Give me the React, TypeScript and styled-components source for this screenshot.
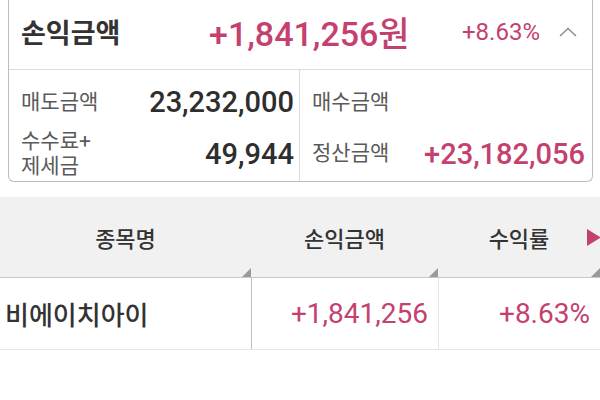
import React from 'react';
import styled, { createGlobalStyle } from 'styled-components';

const GlobalStyle = createGlobalStyle`
  body {
    margin: 0;
    background: #fff;
    font-family: Roboto, "Noto Sans CJK KR", sans-serif;
    color: #333;
  }
`;

const PINK = '#c4416f';

type Row = { name: string; profit: string; rate: string };

const rows: Row[] = [{ name: '비에이치아이', profit: '+1,841,256', rate: '+8.63%' }];

function ChevronUp() {
  return (
    <svg width="18" height="10" viewBox="0 0 18 10">
      <polyline points="1,9 9,1.5 17,9" fill="none" stroke="#888" strokeWidth="1.3" />
    </svg>
  );
}

export default function App() {
  return (
    <Page>
      <GlobalStyle />
      <SummaryCard>
        <SummaryHead>
          <HeadTitle>손익금액</HeadTitle>
          <HeadAmount>+1,841,256원</HeadAmount>
          <HeadRate>+8.63%</HeadRate>
          <Toggle>
            <ChevronUp />
          </Toggle>
        </SummaryHead>
        <SummaryGrid>
          <Cell $left $first>
            <Label>매도금액</Label>
            <Value>23,232,000</Value>
          </Cell>
          <Cell $first>
            <Label>매수금액</Label>
            <Value />
          </Cell>
          <Cell $left>
            <Label>
              수수료+
              <br />
              제세금
            </Label>
            <Value>49,944</Value>
          </Cell>
          <Cell>
            <Label>정산금액</Label>
            <Value $pink>+23,182,056</Value>
          </Cell>
        </SummaryGrid>
      </SummaryCard>

      <Table>
        <HeaderRow>
          <HeadCell>종목명</HeadCell>
          <HeadCell>손익금액</HeadCell>
          <HeadCell>
            수익률
            <MoreArrow width="14" height="17" viewBox="0 0 14 17">
              <polygon points="0,0 14,8.5 0,17" fill={PINK} />
            </MoreArrow>
          </HeadCell>
        </HeaderRow>
        {rows.map((r) => (
          <BodyRow key={r.name}>
            <NameCell>{r.name}</NameCell>
            <NumCell $divider="#bdbdbd">{r.profit}</NumCell>
            <NumCell $divider="#e6e6e6">{r.rate}</NumCell>
          </BodyRow>
        ))}
      </Table>
    </Page>
  );
}

const Page = styled.div`
  width: 600px;
  height: 400px;
  overflow: hidden;
`;

const SummaryCard = styled.div`
  margin: 0 7px 0 8px;
  border: 1px solid #bcbcbc;
  border-top: none;
  border-radius: 0 0 6px 6px;
`;

const SummaryHead = styled.div`
  height: 70px;
  display: flex;
  align-items: center;
  padding: 0 15px 0 12px;
  border-bottom: 1px solid #dcdcdc;
  box-sizing: border-box;
`;

const HeadTitle = styled.div`
  width: 188px;
  font-size: 27px;
  font-weight: 700;
  color: #333;
  margin-top: -6px;
`;

const HeadAmount = styled.div`
  font-size: 34px;
  font-weight: 500;
  color: ${PINK};
  margin-top: -6px;
`;

const HeadRate = styled.div`
  margin-left: auto;
  font-size: 24px;
  color: ${PINK};
  margin-top: -6px;
`;

const Toggle = styled.div`
  display: flex;
  margin-left: 19px;
  margin-top: -6px;
`;

const SummaryGrid = styled.div`
  display: grid;
  grid-template-columns: 291px 1fr;
  grid-template-rows: 56px 55px;
`;

const Cell = styled.div<{ $left?: boolean; $first?: boolean }>`
  display: flex;
  align-items: center;
  justify-content: space-between;
  padding: ${(p) => (p.$first ? '8px' : '0')} ${(p) => (p.$left ? '5px' : '7px')} 0 12px;
  border-right: ${(p) => (p.$left ? '1px solid #dcdcdc' : 'none')};
`;

const Label = styled.div`
  font-size: 21px;
  line-height: 25px;
  color: #5a5a5a;
`;

const Value = styled.div<{ $pink?: boolean }>`
  font-size: 29px;
  font-weight: 500;
  color: ${(p) => (p.$pink ? PINK : '#2e2e2e')};
`;

const Table = styled.div`
  margin-top: 15px;
`;

const HeaderRow = styled.div`
  display: grid;
  grid-template-columns: 251px 187px 1fr;
  height: 81px;
  background: #f1f1f1;
  border-bottom: 1px solid #c8c8c8;
  box-sizing: border-box;
`;

const HeadCell = styled.div`
  position: relative;
  display: flex;
  align-items: center;
  justify-content: center;
  font-size: 22px;
  font-weight: 500;
  color: #333;

  &::after {
    content: '';
    position: absolute;
    right: 0;
    bottom: 0;
    border-style: solid;
    border-width: 0 0 9px 9px;
    border-color: transparent transparent #9a9a9a transparent;
  }
`;

const MoreArrow = styled.svg`
  position: absolute;
  right: -1px;
  top: 32px;
`;

const BodyRow = styled.div`
  display: grid;
  grid-template-columns: 251px 187px 1fr;
  height: 72px;
  border-bottom: 1px solid #e6e6e6;
  box-sizing: border-box;
`;

const NameCell = styled.div`
  display: flex;
  align-items: center;
  padding-left: 5px;
  font-size: 26px;
  font-weight: 500;
  color: #333;
`;

const NumCell = styled.div<{ $divider: string }>`
  display: flex;
  align-items: center;
  justify-content: flex-end;
  padding-right: 10px;
  font-size: 28px;
  color: ${PINK};
  border-left: 1px solid ${(p) => p.$divider};
`;
